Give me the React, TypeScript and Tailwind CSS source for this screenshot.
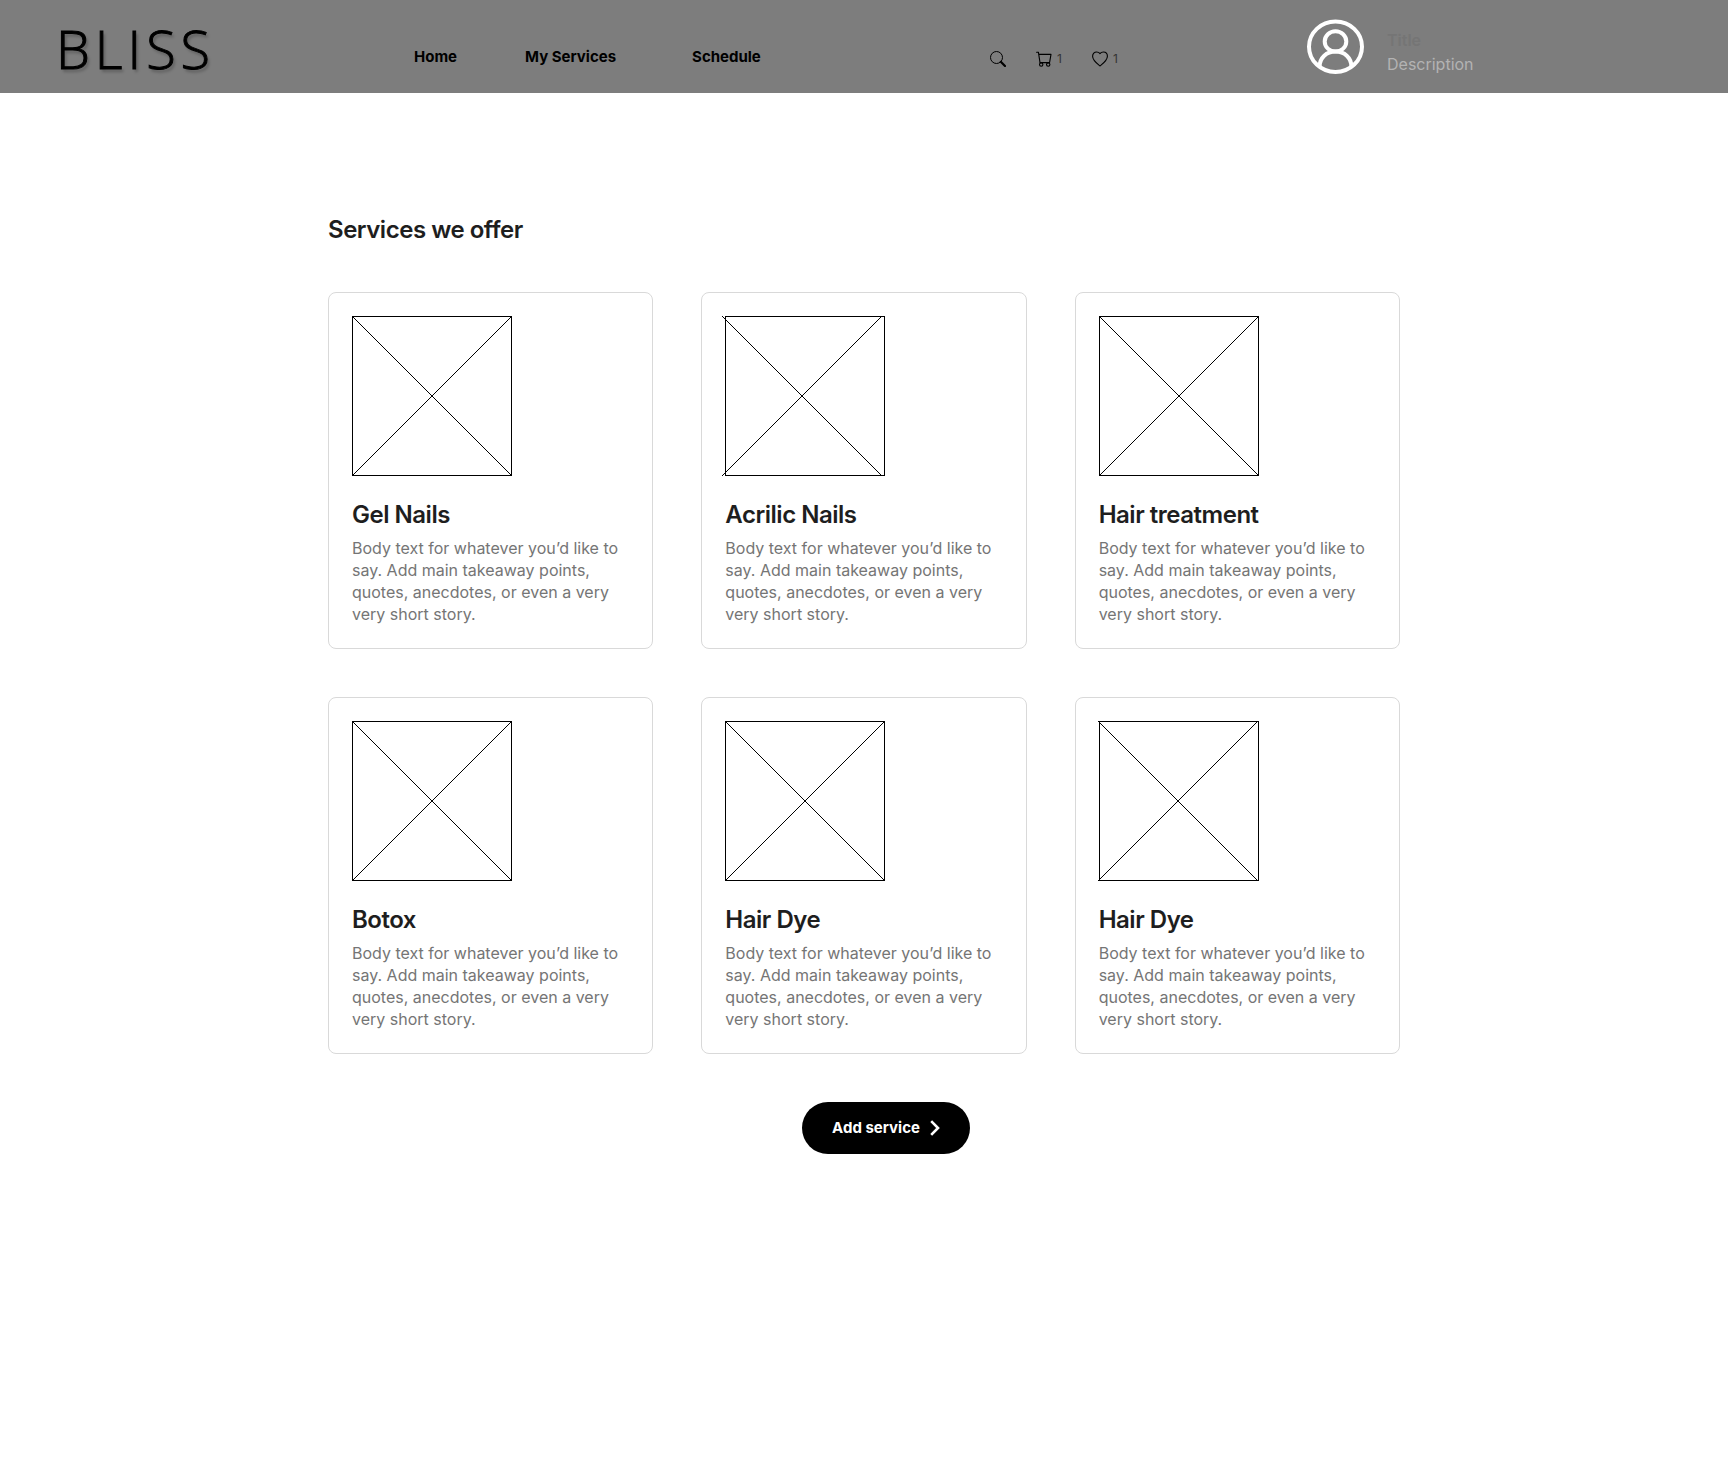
import React from "react";

type Service = { id: number; name: string; shift: number };

const services: Service[] = [
  { id: 1, name: "Gel Nails", shift: 0 },
  { id: 2, name: "Acrilic Nails", shift: -3 },
  { id: 3, name: "Hair treatment", shift: 0 },
  { id: 4, name: "Botox", shift: 0 },
  { id: 5, name: "Hair Dye", shift: 0 },
  { id: 6, name: "Hair Dye", shift: -1 },
];

const navItems = [
  { label: "Home", spacing: "" },
  { label: "My Services", spacing: "ml-17" },
  { label: "Schedule", spacing: "ml-19" },
];

function SearchIcon() {
  return (
    <svg viewBox="0 0 16 16" className="size-4" fill="none" stroke="#000" aria-hidden="true">
      <circle cx="6.5" cy="6.5" r="6" strokeWidth="1" />
      <path d="M10.8 10.8 L15 15" strokeWidth="2.2" strokeLinecap="round" />
    </svg>
  );
}

function CartIcon() {
  return (
    <svg viewBox="0 0 16 16" className="size-4" fill="none" stroke="#000" strokeLinecap="round" strokeLinejoin="round" aria-hidden="true">
      <path d="M0.6 1.2 H2.4 L4 11.6 H13.4 M2.8 3.4 H15 L13.6 11.4" strokeWidth="1.1" />
      <circle cx="5.2" cy="13.6" r="1.7" strokeWidth="1.1" />
      <circle cx="12.2" cy="13.6" r="1.7" strokeWidth="1.1" />
    </svg>
  );
}

function HeartIcon() {
  return (
    <svg viewBox="0 0 16 16" className="size-4" fill="none" stroke="#000" strokeWidth="1.1" strokeLinejoin="round" aria-hidden="true">
      <path d="M8 15 C5.5 13 0.6 9.6 0.6 5.3 C0.6 2.7 2.4 1 4.6 1 C6.1 1 7.4 1.8 8 2.6 C8.6 1.8 9.9 1 11.4 1 C13.6 1 15.4 2.7 15.4 5.3 C15.4 9.6 10.5 13 8 15 Z" />
    </svg>
  );
}

function AvatarIcon() {
  return (
    <svg viewBox="0 0 58 56" className="h-14 w-[58px] shrink-0" fill="none" stroke="#fff" strokeWidth="4" aria-hidden="true">
      <ellipse cx="28.5" cy="27.7" rx="26.5" ry="25.2" />
      <ellipse cx="28.5" cy="22.4" rx="10.8" ry="10.2" />
      <path d="M12.7 47.2 C12.7 38.7 19.5 32.6 28.5 32.6 C37.5 32.6 44.3 38.7 44.3 47.2" />
    </svg>
  );
}

function Placeholder({ shift }: { shift: number }) {
  return (
    <svg viewBox="0 0 160 160" className="size-40 overflow-visible" fill="none" stroke="#000" strokeWidth="1" aria-hidden="true">
      <rect x="0.5" y="0.5" width="159" height="159" />
      <path d={`M${shift} 0 L${shift + 160} 160 M${shift + 160} 0 L${shift} 160`} />
    </svg>
  );
}

function ServiceCard({ service }: { service: Service }) {
  return (
    <article className="rounded-lg border border-[#d9d9d9] p-[23px]">
      <Placeholder shift={service.shift} />
      <h2 className="mt-6 text-2xl leading-[29px] font-semibold tracking-[-0.02em] text-[#1e1e1e]">{service.name}</h2>
      <p className="mt-2 text-base leading-[22px] text-[#757575]">
        Body text for whatever you’d like to say. Add main takeaway points, quotes, anecdotes, or even a very very short story.
      </p>
    </article>
  );
}

export default function App() {
  return (
    <div className="min-h-screen bg-white font-['Inter',sans-serif]">
      <header className="grid h-[93px] grid-cols-[414fr_576fr_317fr_421fr] bg-[#7d7d7d] text-black">
        <a
          href="#"
          className="self-center pt-0.5 pl-14 font-['Open_Sans',sans-serif] text-[54px] leading-none font-light tracking-[5px] [-webkit-text-stroke:1px_#000] [text-shadow:2px_3px_3px_rgba(0,0,0,0.25)]"
        >
          BLISS
        </a>
        <nav className="flex items-center pt-5 text-[15px] leading-5 font-bold whitespace-nowrap">
          {navItems.map((item) => (
            <a key={item.label} href="#" className={item.spacing}>
              {item.label}
            </a>
          ))}
        </nav>
        <div className="flex items-center pt-6 text-xs text-[#333]">
          <button type="button" aria-label="Search">
            <SearchIcon />
          </button>
          <button type="button" aria-label="Cart, 1 item" className="ml-[30px] flex items-center gap-[5px]">
            <CartIcon />1
          </button>
          <button type="button" aria-label="Favourites, 1 item" className="ml-[30px] flex items-center gap-[5px]">
            <HeartIcon />1
          </button>
        </div>
        <div className="flex items-center gap-[22px]">
          <AvatarIcon />
          <div className="pt-2.5 text-base leading-6">
            <p className="font-semibold text-[#757575]">Title</p>
            <p className="text-[#b3b3b3]">Description</p>
          </div>
        </div>
      </header>

      <main className="mx-auto max-w-[1072px] pt-[122px] pb-16">
        <h1 className="text-2xl leading-[29px] font-semibold tracking-[-0.02em] text-[#1e1e1e]">Services we offer</h1>
        <section className="mt-12 grid grid-cols-3 gap-12">
          {services.map((service) => (
            <ServiceCard key={service.id} service={service} />
          ))}
        </section>
        <div className="mt-12 flex justify-center pl-11">
          <button type="button" className="flex h-[52px] items-center gap-2.5 rounded-full bg-black px-[30px] text-[15px] font-bold text-white">
            Add service
            <svg viewBox="0 0 10 16" className="h-4 w-2.5" fill="none" stroke="#fff" strokeWidth="2.6" aria-hidden="true">
              <path d="M1.2 1.2 L8 8 L1.2 14.8" />
            </svg>
          </button>
        </div>
      </main>
    </div>
  );
}
